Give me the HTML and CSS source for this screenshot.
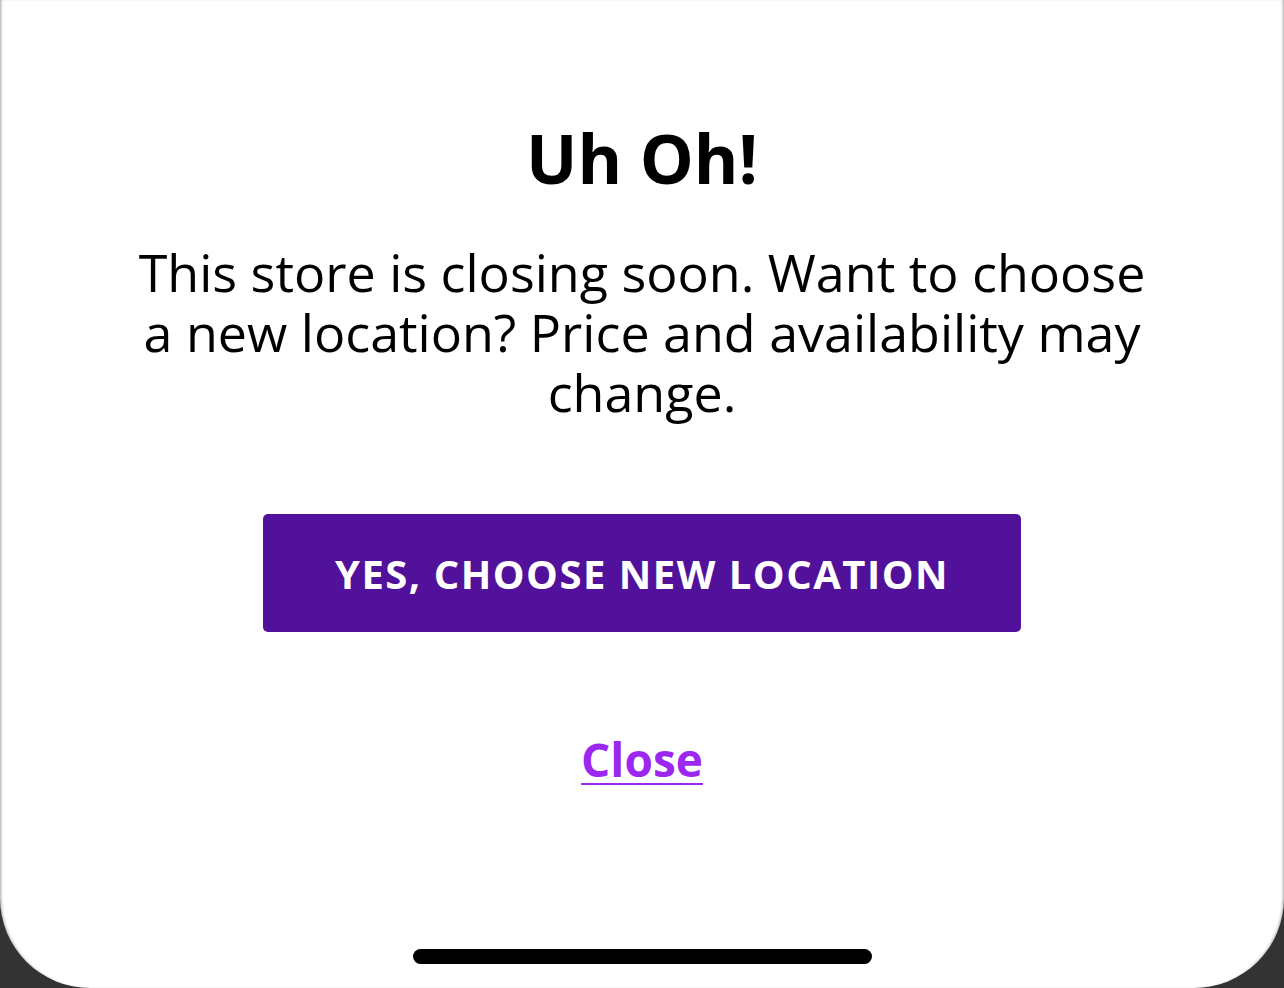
FILE: index.html
```html
<!DOCTYPE html>
<html>
<head>
<meta charset="utf-8">
<link rel="stylesheet" href="styles.css">
</head>
<body>
<div class="sheet">
  <div class="content">
    <h1 class="title">Uh Oh!</h1>
    <p class="message">This store is closing soon. Want to choose a new location? Price and availability may change.</p>
    <button class="primary">YES, CHOOSE NEW LOCATION</button>
    <a class="close" href="#">Close</a>
  </div>
  <div class="home-indicator"></div>
</div>
</body>
</html>
```

FILE: styles.css
```css
html, body {
  margin: 0;
  padding: 0;
  width: 1284px;
  height: 988px;
  overflow: hidden;
  background: #333333;
}
body {
  font-family: "Open Sans", "Liberation Sans", sans-serif;
}
.sheet {
  box-sizing: border-box;
  width: 1284px;
  height: 988px;
  background: #ffffff;
  border-radius: 0 0 90px 90px;
  display: flex;
  flex-direction: column;
  align-items: center;
  box-shadow: inset 3px 0 3px -2px rgba(0,0,0,0.35), inset -3px 0 3px -2px rgba(0,0,0,0.35);
}
.content {
  display: flex;
  flex-direction: column;
  align-items: center;
  width: 1012px;
  flex: 1;
}
.title {
  margin: 118px 0 0;
  font-size: 68px;
  line-height: 80px;
  font-weight: 700;
  color: #000;
}
.message {
  margin: 44px 0 0;
  font-size: 52px;
  line-height: 60px;
  font-weight: 400;
  text-align: center;
  color: #000;
}
.primary {
  margin-top: 92px;
  width: 758px;
  height: 118px;
  flex: none;
  border: 0;
  border-radius: 5px;
  background: #52119a;
  color: #fff;
  font-family: inherit;
  font-size: 40px;
  font-weight: 700;
  letter-spacing: 1.5px;
}
.close {
  margin-top: 96px;
  font-size: 46px;
  font-weight: 700;
  color: #9b27f0;
  text-decoration: underline;
  text-decoration-thickness: 2px;
  text-underline-offset: 6px;
}
.home-indicator {
  width: 459px;
  height: 15px;
  border-radius: 8px;
  background: #000;
  margin-bottom: 24px;
}
```
